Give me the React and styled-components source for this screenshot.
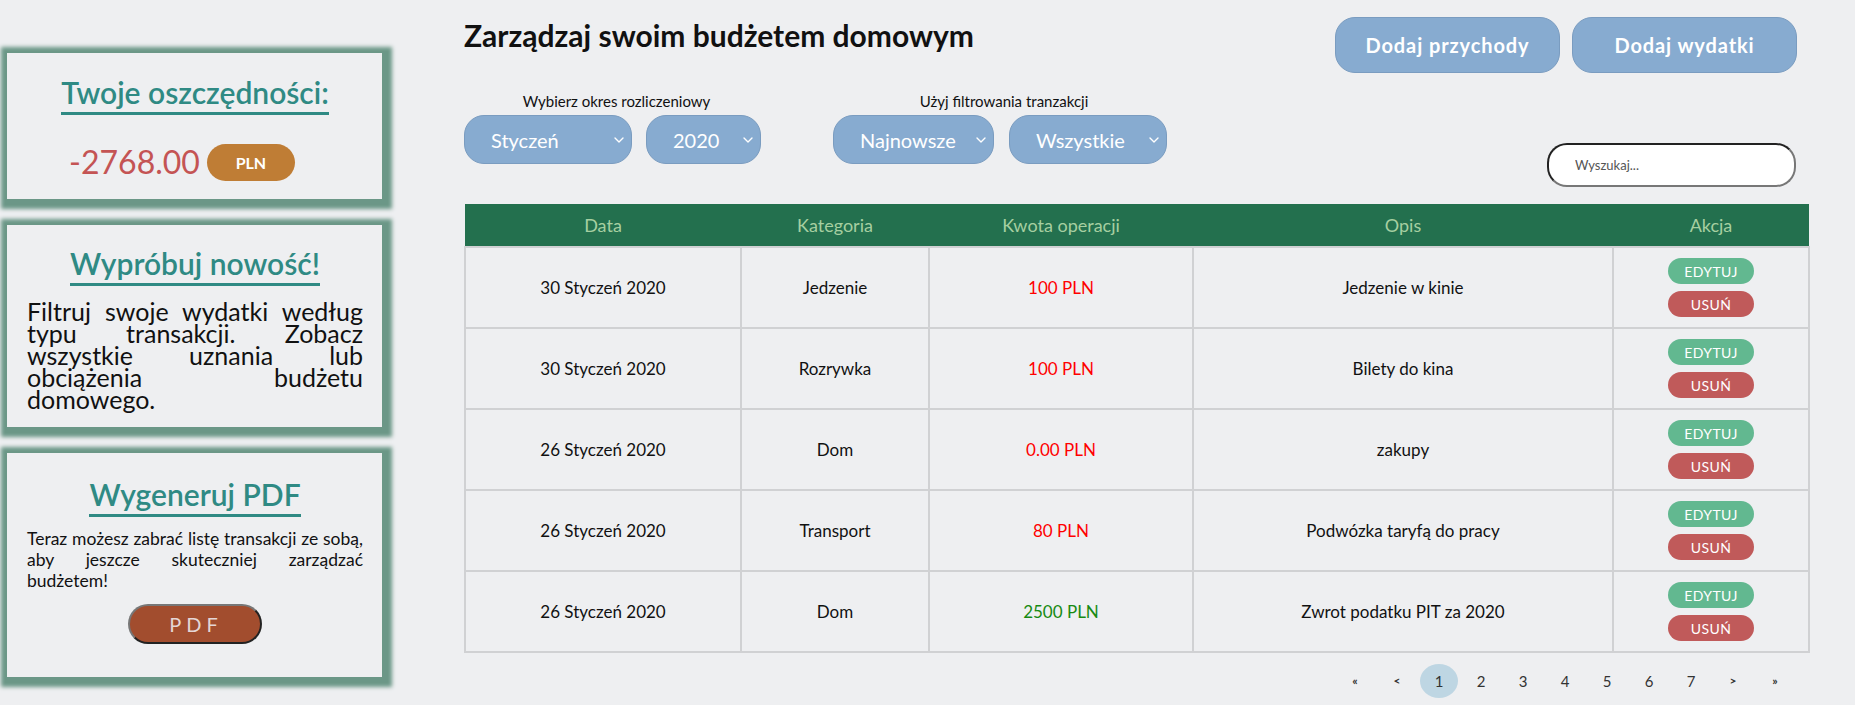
import React from 'react'
import styled, { createGlobalStyle } from 'styled-components'
import { ChevronDown } from 'lucide-react'

const GlobalStyle = createGlobalStyle`
    * { box-sizing: border-box; }
    body {
        margin: 0;
        background: #eeeff1;
        font-family: Lato, "Noto Sans", sans-serif;
        color: #111;
    }
`

const Page = styled.div`
    display: grid;
    grid-template-columns: 464px 1fr;
    width: 1855px;
    min-height: 705px;
    padding-right: 47px;
`

const Sidebar = styled.aside`
    display: flex;
    flex-direction: column;
    gap: 26px;
    width: 382px;
    padding: 53px 0 0 7px;
`

const Card = styled.section`
    display: flex;
    flex-direction: column;
    align-items: center;
    padding: ${p => p.$pad || '21px 19px 18px 20px'};
    background: #eeeff1;
    box-shadow: 2px 2px 4px 8px #6b9787;
`

const CardTitle = styled.h2`
    margin: 0;
    padding-bottom: 2px;
    font-size: 30px;
    font-weight: 600;
    line-height: 36px;
    color: #2f8a84;
    border-bottom: 3px solid #2f8a84;
`

const Savings = styled.div`
    display: flex;
    align-items: center;
    gap: 7px;
    margin: 28px 26px 0 0;
    span {
        font-size: 32px;
        line-height: 38px;
        color: #c45454;
    }
`

const Badge = styled.div`
    width: 88px;
    height: 37px;
    border-radius: 19px;
    background: #bf7d35;
    color: #fff;
    font-size: 16px;
    font-weight: 700;
    line-height: 37px;
    text-align: center;
`

const CardText = styled.p`
    align-self: stretch;
    margin: ${p => p.$margin || '14px 0 0'};
    font-size: ${p => p.$size}px;
    line-height: ${p => p.$lh}px;
    text-align: justify;
`

const PdfButton = styled.button`
    width: 134px;
    height: 40px;
    margin-top: 13px;
    border: 2px solid;
    border-color: #777 #222 #222 #777;
    border-radius: 20px;
    background: #a24d2e;
    color: #e4d6d6;
    font-family: inherit;
    font-size: 20px;
    letter-spacing: 5px;
    padding-left: 8px;
`

const Main = styled.main`
    display: flex;
    flex-direction: column;
`

const TopBar = styled.div`
    display: flex;
    justify-content: space-between;
    align-items: flex-start;
`

const LeftTop = styled.div`
    display: flex;
    flex-direction: column;
`

const Title = styled.h1`
    margin: 17px 0 0;
    font-size: 30px;
    font-weight: 700;
    line-height: 36px;
    color: #111;
`

const Filters = styled.div`
    display: flex;
    gap: 72px;
    margin-top: 40px;
`

const FilterGroup = styled.div`
    display: flex;
    flex-direction: column;
    align-items: center;
`

const FilterLabel = styled.label`
    margin-bottom: 5px;
    padding-left: 8px;
    font-size: 15px;
    line-height: 17px;
`

const SelectRow = styled.div`
    display: flex;
    gap: ${p => p.$gap || 14}px;
`

const SelectWrap = styled.div`
    position: relative;
    width: ${p => p.$w}px;
    height: 49px;
    svg {
        position: absolute;
        right: 5px;
        top: 17px;
        color: #fff;
        pointer-events: none;
    }
`

const Select = styled.select`
    appearance: none;
    width: 100%;
    height: 100%;
    padding-left: 26px;
    border: 1px solid #7a9cc0;
    border-radius: 20px;
    background: #87abd0;
    color: #fff;
    font-family: inherit;
    font-size: 20px;
    outline: none;
`

const RightTop = styled.div`
    display: flex;
    flex-direction: column;
    align-items: flex-end;
    padding-right: 13px;
`

const ButtonRow = styled.div`
    display: flex;
    gap: 12px;
    margin-top: 17px;
`

const AddButton = styled.button`
    width: 225px;
    height: 56px;
    border: 1px solid #7a9cc0;
    border-radius: 20px;
    background: #87abd0;
    color: #fff;
    font-family: inherit;
    font-size: 20px;
    font-weight: 700;
    letter-spacing: 0.9px;
`

const Search = styled.input`
    width: 249px;
    height: 44px;
    margin: 70px 1px 0 0;
    padding-left: 26px;
    border: 2px solid;
    border-color: #222 #777 #777 #222;
    border-radius: 20px;
    background: #fff;
    font-family: inherit;
    font-size: 13px;
    outline: none;
    &::placeholder { color: #555; }
`

const Table = styled.table`
    width: 100%;
    margin-top: 17px;
    border-collapse: collapse;
    table-layout: fixed;
`

const Th = styled.th`
    height: 43px;
    padding: 0;
    background: #23704e;
    color: #a6cfa1;
    font-size: 18px;
    font-weight: 400;
`

const Td = styled.td`
    height: 81px;
    padding: 0;
    border: 2px solid #d0d1d3;
    text-align: center;
    font-size: 17px;
    color: ${p => p.$color || '#111'};
`

const Actions = styled.div`
    display: flex;
    flex-direction: column;
    align-items: center;
    gap: 7px;
`

const ActionButton = styled.button`
    width: 86px;
    height: 26px;
    border: none;
    border-radius: 13px;
    background: ${p => p.$bg};
    color: #fff;
    font-family: inherit;
    font-size: 14px;
    letter-spacing: 0.4px;
`

const Pagination = styled.nav`
    display: flex;
    justify-content: flex-end;
    gap: 4px;
    margin-top: 11px;
    padding-right: 16px;
`

const PageItem = styled.span`
    width: 38px;
    height: 34px;
    border-radius: 50%;
    background: ${p => (p.$active ? '#bed6e3' : 'transparent')};
    color: #333;
    font-size: ${p => (p.$arrow ? 12 : 15)}px;
    font-weight: ${p => (p.$arrow ? 700 : 400)};
    line-height: 34px;
    text-align: center;
`

const rows = [
    { date: '30 Styczeń 2020', cat: 'Jedzenie', amount: '100 PLN', desc: 'Jedzenie w kinie', income: false },
    { date: '30 Styczeń 2020', cat: 'Rozrywka', amount: '100 PLN', desc: 'Bilety do kina', income: false },
    { date: '26 Styczeń 2020', cat: 'Dom', amount: '0.00 PLN', desc: 'zakupy', income: false },
    { date: '26 Styczeń 2020', cat: 'Transport', amount: '80 PLN', desc: 'Podwózka taryfą do pracy', income: false },
    { date: '26 Styczeń 2020', cat: 'Dom', amount: '2500 PLN', desc: 'Zwrot podatku PIT za 2020', income: true },
]

const pages = ['«', '<', '1', '2', '3', '4', '5', '6', '7', '>', '»']

function Dropdown({ width, value, options }) {
    return (
        <SelectWrap $w={width}>
            <Select defaultValue={value}>
                {options.map(o => <option key={o}>{o}</option>)}
            </Select>
            <ChevronDown size={16} strokeWidth={2} />
        </SelectWrap>
    )
}

export default function App() {
    return (
        <>
            <GlobalStyle />
            <Page>
                <Sidebar>
                    <Card>
                        <CardTitle>Twoje oszczędności:</CardTitle>
                        <Savings>
                            <span>-2768.00</span>
                            <Badge>PLN</Badge>
                        </Savings>
                    </Card>
                    <Card $pad="20px 19px 17px 20px">
                        <CardTitle>Wypróbuj nowość!</CardTitle>
                        <CardText $size={25} $lh={22}>
                            Filtruj swoje wydatki według typu transakcji. Zobacz wszystkie uznania lub obciążenia budżetu domowego.
                        </CardText>
                    </Card>
                    <Card $pad="23px 19px 33px 20px">
                        <CardTitle>Wygeneruj PDF</CardTitle>
                        <CardText $size={17.5} $lh={21} $margin="11px 0 0">
                            Teraz możesz zabrać listę transakcji ze sobą, aby jeszcze skuteczniej zarządzać budżetem!
                        </CardText>
                        <PdfButton>PDF</PdfButton>
                    </Card>
                </Sidebar>

                <Main>
                    <TopBar>
                        <LeftTop>
                            <Title>Zarządzaj swoim budżetem domowym</Title>
                            <Filters>
                                <FilterGroup>
                                    <FilterLabel>Wybierz okres rozliczeniowy</FilterLabel>
                                    <SelectRow>
                                        <Dropdown width={168} value="Styczeń" options={['Styczeń', 'Luty', 'Marzec']} />
                                        <Dropdown width={115} value="2020" options={['2019', '2020', '2021']} />
                                    </SelectRow>
                                </FilterGroup>
                                <FilterGroup>
                                    <FilterLabel>Użyj filtrowania tranzakcji</FilterLabel>
                                    <SelectRow $gap={15}>
                                        <Dropdown width={161} value="Najnowsze" options={['Najnowsze', 'Najstarsze']} />
                                        <Dropdown width={158} value="Wszystkie" options={['Wszystkie', 'Przychody', 'Wydatki']} />
                                    </SelectRow>
                                </FilterGroup>
                            </Filters>
                        </LeftTop>
                        <RightTop>
                            <ButtonRow>
                                <AddButton>Dodaj przychody</AddButton>
                                <AddButton>Dodaj wydatki</AddButton>
                            </ButtonRow>
                            <Search placeholder="Wyszukaj..." />
                        </RightTop>
                    </TopBar>

                    <Table>
                        <colgroup>
                            <col style={{ width: 276 }} />
                            <col style={{ width: 188 }} />
                            <col style={{ width: 264 }} />
                            <col style={{ width: 420 }} />
                            <col style={{ width: 196 }} />
                        </colgroup>
                        <thead>
                            <tr>
                                <Th>Data</Th>
                                <Th>Kategoria</Th>
                                <Th>Kwota operacji</Th>
                                <Th>Opis</Th>
                                <Th>Akcja</Th>
                            </tr>
                        </thead>
                        <tbody>
                            {rows.map((r, i) => (
                                <tr key={i}>
                                    <Td>{r.date}</Td>
                                    <Td>{r.cat}</Td>
                                    <Td $color={r.income ? '#178a12' : '#ff0000'}>{r.amount}</Td>
                                    <Td>{r.desc}</Td>
                                    <Td>
                                        <Actions>
                                            <ActionButton $bg="#62b890">EDYTUJ</ActionButton>
                                            <ActionButton $bg="#c05a5a">USUŃ</ActionButton>
                                        </Actions>
                                    </Td>
                                </tr>
                            ))}
                        </tbody>
                    </Table>

                    <Pagination>
                        {pages.map((p, i) => (
                            <PageItem key={i} $active={p === '1'} $arrow={isNaN(p)}>{p}</PageItem>
                        ))}
                    </Pagination>
                </Main>
            </Page>
        </>
    )
}
